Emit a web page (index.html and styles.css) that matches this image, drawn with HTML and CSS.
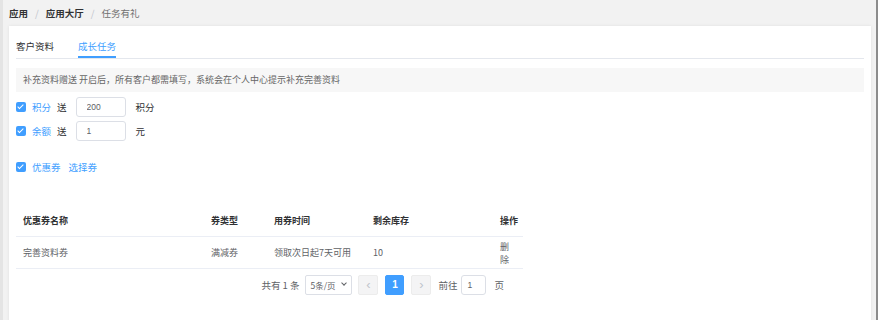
FILE: index.html
```html
<!DOCTYPE html>
<html lang="zh-CN">

<head>
    <meta charset="UTF-8">
    <meta name="viewport" content="width=device-width, initial-scale=1.0">
    <title>任务有礼</title>
    <link rel="stylesheet" href="styles.css">
</head>

<body>
    <div class="frame">
        <div class="breadcrumb">
            <span class="crumb strong">应用</span>
            <span class="sep">/</span>
            <span class="crumb strong">应用大厅</span>
            <span class="sep">/</span>
            <span class="crumb">任务有礼</span>
        </div>

        <div class="card">
            <div class="tabs">
                <div class="tab">客户资料</div>
                <div class="tab active">成长任务</div>
            </div>

            <div class="notice">补充资料赠送 开启后，所有客户都需填写，系统会在个人中心提示补充完善资料</div>

            <div class="form-row">
                <span class="checkbox"></span>
                <span class="check-label">积分</span>
                <span class="word">送</span>
                <input class="num-input" type="text" value="200">
                <span class="unit">积分</span>
            </div>
            <div class="form-row">
                <span class="checkbox"></span>
                <span class="check-label">余额</span>
                <span class="word">送</span>
                <input class="num-input" type="text" value="1">
                <span class="unit">元</span>
            </div>
            <div class="form-row coupon-row">
                <span class="checkbox"></span>
                <span class="check-label">优惠券</span>
                <a class="link">选择券</a>
            </div>

            <div class="table-wrap">
                <table class="coupon-table">
                    <thead>
                        <tr>
                            <th class="c-name">优惠券名称</th>
                            <th class="c-type">券类型</th>
                            <th class="c-time">用券时间</th>
                            <th class="c-stock">剩余库存</th>
                            <th class="c-op">操作</th>
                        </tr>
                    </thead>
                    <tbody>
                        <tr>
                            <td>完善资料券</td>
                            <td>满减券</td>
                            <td>领取次日起7天可用</td>
                            <td>10</td>
                            <td class="op">删除</td>
                        </tr>
                    </tbody>
                </table>

                <div class="pager">
                    <span class="total">共有 1 条</span>
                    <div class="size-select">5条/页 <span class="caret"></span></div>
                    <button class="pg-btn" type="button">&lsaquo;</button>
                    <button class="pg-btn current" type="button">1</button>
                    <button class="pg-btn" type="button">&rsaquo;</button>
                    <span class="goto">前往</span>
                    <input class="goto-input" type="text" value="1">
                    <span class="goto">页</span>
                </div>
            </div>
        </div>
    </div>
</body>
</html>
```

FILE: styles.css
```css
body {
    margin: 0;
    padding: 0;
    font-family: "Noto Sans CJK SC", "Liberation Sans", sans-serif;
    font-size: 9.5px;
    color: #606266;
    background-color: #f2f2f2;
}

.frame {
    height: 320px;
    box-sizing: border-box;
    border-left: 3px solid #e4e4e4;
    border-right: 2px solid #8c8c8c;
    padding: 0 5px 0 6px;
    background-color: #f2f2f2;
    overflow: hidden;
}

.breadcrumb {
    height: 26px;
    display: flex;
    align-items: center;
    gap: 7px;
    color: #707070;
}

.breadcrumb .strong {
    color: #303133;
    font-weight: bold;
}

.breadcrumb .sep {
    color: #c0c4cc;
}

.card {
    background-color: #ffffff;
    box-shadow: 0 0 3px rgba(0, 0, 0, 0.08);
    padding: 10px 7px 0 7px;
    height: 300px;
}

.tabs {
    display: flex;
    gap: 24px;
    border-bottom: 1px solid #e4e7ed;
    height: 22px;
}

.tab {
    color: #303133;
    line-height: 20px;
    height: 20px;
    border-bottom: 2px solid transparent;
}

.tab.active {
    color: #409eff;
    border-bottom-color: #409eff;
}

.notice {
    margin-top: 9px;
    background-color: #f7f7f7;
    height: 24px;
    line-height: 24px;
    padding-left: 7px;
    font-size: 9px;
    color: #666666;
}

.form-row {
    display: flex;
    align-items: center;
    height: 20px;
    margin-top: 5px;
    color: #606266;
}

.form-row + .form-row {
    margin-top: 4px;
}

.form-row.coupon-row {
    margin-top: 16px;
}

.checkbox {
    width: 10px;
    height: 10px;
    border-radius: 2px;
    background-color: #409eff;
    position: relative;
    margin-right: 6px;
}

.checkbox::after {
    content: "";
    position: absolute;
    left: 3px;
    top: 1px;
    width: 2px;
    height: 5px;
    border: solid #ffffff;
    border-width: 0 1.5px 1.5px 0;
    transform: rotate(45deg);
}

.check-label {
    color: #409eff;
    margin-right: 6px;
}

.word {
    margin-right: 9px;
    color: #303133;
}

.num-input {
    width: 50px;
    height: 20px;
    box-sizing: border-box;
    border: 1px solid #dcdfe6;
    border-radius: 3px;
    padding: 0 10px;
    font-family: "Liberation Sans", sans-serif;
    font-size: 8.5px;
    color: #606266;
    outline: none;
}

.unit {
    margin-left: 10px;
    color: #303133;
}

.link {
    color: #409eff;
    margin-left: 2px;
}

.table-wrap {
    width: 507px;
    margin-top: 28px;
}

.coupon-table {
    width: 100%;
    border-collapse: collapse;
    table-layout: fixed;
    font-size: 9px;
}

.coupon-table th {
    text-align: left;
    font-weight: bold;
    color: #303133;
    height: 31px;
    padding: 0 7px;
    white-space: nowrap;
    border-bottom: 1px solid #ebeef5;
}

.coupon-table td {
    height: 31px;
    padding: 0 7px;
    border-bottom: 1px solid #ebeef5;
    color: #606266;
    white-space: nowrap;
}

.coupon-table td.op {
    white-space: normal;
    line-height: 13px;
    word-break: break-all;
}

.c-name { width: 174px; }
.c-type { width: 49px; }
.c-time { width: 85px; }
.c-stock { width: 113px; }
.c-op { width: 16px; }

.pager {
    display: flex;
    align-items: center;
    justify-content: flex-end;
    padding-right: 19px;
    height: 32px;
    color: #606266;
}

.total {
    margin-right: 6px;
}

.size-select {
    height: 20px;
    width: 47px;
    box-sizing: border-box;
    border: 1px solid #dcdfe6;
    border-radius: 2px;
    display: flex;
    align-items: center;
    padding-left: 4px;
    font-size: 8.5px;
    color: #606266;
    position: relative;
    margin-right: 6px;
}

.caret {
    position: absolute;
    right: 5px;
    top: 5px;
    width: 3px;
    height: 3px;
    border: solid #606266;
    border-width: 0 1.5px 1.5px 0;
    transform: rotate(45deg);
}

.pg-btn {
    width: 20px;
    height: 20px;
    border: 1px solid #ececec;
    border-radius: 2px;
    background-color: #f4f4f5;
    color: #c0c4cc;
    font-size: 13px;
    padding: 0;
    margin-right: 7px;
    line-height: 16px;
    font-family: "Liberation Sans", sans-serif;
}

.pg-btn.current {
    background-color: #409eff;
    border-color: #409eff;
    color: #ffffff;
    font-size: 10px;
    font-weight: bold;
    width: 19px;
}

.goto {
    color: #606266;
}

.goto-input {
    width: 25px;
    height: 20px;
    box-sizing: border-box;
    border: 1px solid #dcdfe6;
    border-radius: 3px;
    margin: 0 8px 0 4px;
    padding: 0 5px;
    font-family: "Liberation Sans", sans-serif;
    font-size: 8.5px;
    color: #606266;
    outline: none;
}
```
